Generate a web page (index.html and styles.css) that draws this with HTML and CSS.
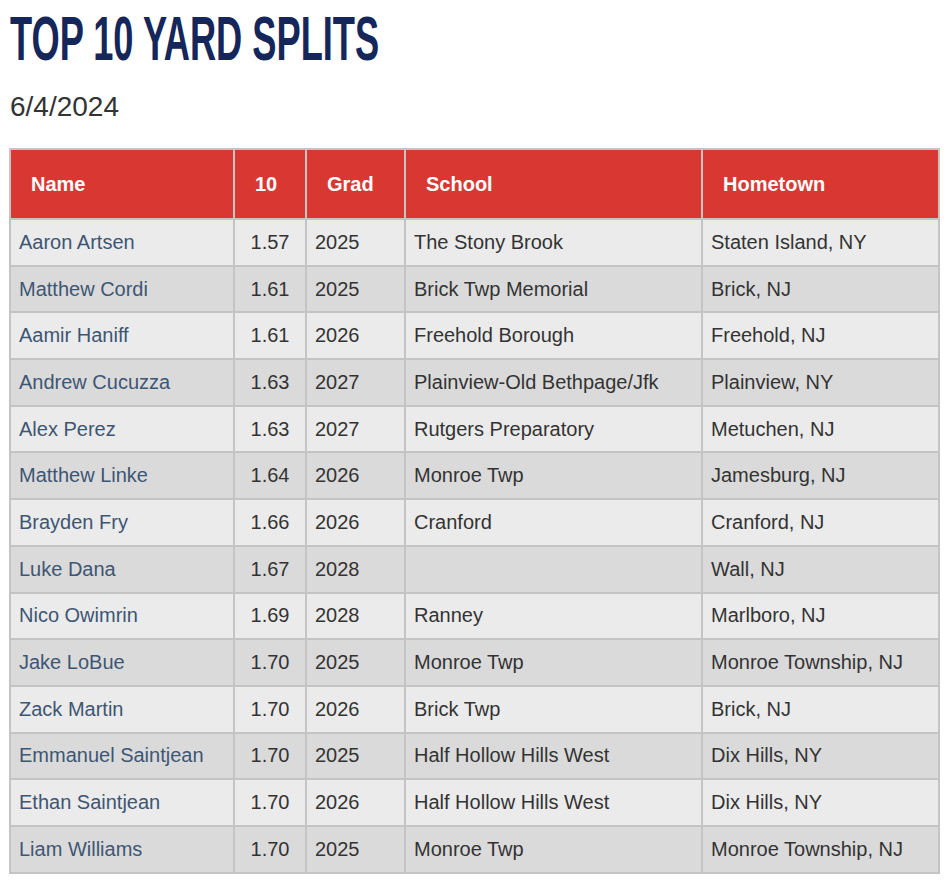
FILE: index.html
```html
<!DOCTYPE html>
<html lang="en">
<head>
<meta charset="utf-8">
<title>Top 10 Yard Splits</title>
<link rel="stylesheet" href="styles.css">
</head>
<body>
<main class="page">
  <h1 class="title"><span class="title-text">TOP 10 YARD SPLITS</span></h1>
  <p class="date">6/4/2024</p>
  <table class="splits">
    <colgroup>
      <col class="c-name"><col class="c-ten"><col class="c-grad"><col class="c-school"><col class="c-home">
    </colgroup>
    <thead>
      <tr><th>Name</th><th>10</th><th>Grad</th><th>School</th><th>Hometown</th></tr>
    </thead>
    <tbody>
      <tr><td class="name">Aaron Artsen</td><td class="num">1.57</td><td>2025</td><td>The Stony Brook</td><td>Staten Island, NY</td></tr>
      <tr><td class="name">Matthew Cordi</td><td class="num">1.61</td><td>2025</td><td>Brick Twp Memorial</td><td>Brick, NJ</td></tr>
      <tr><td class="name">Aamir Haniff</td><td class="num">1.61</td><td>2026</td><td>Freehold Borough</td><td>Freehold, NJ</td></tr>
      <tr><td class="name">Andrew Cucuzza</td><td class="num">1.63</td><td>2027</td><td>Plainview-Old Bethpage/Jfk</td><td>Plainview, NY</td></tr>
      <tr><td class="name">Alex Perez</td><td class="num">1.63</td><td>2027</td><td>Rutgers Preparatory</td><td>Metuchen, NJ</td></tr>
      <tr><td class="name">Matthew Linke</td><td class="num">1.64</td><td>2026</td><td>Monroe Twp</td><td>Jamesburg, NJ</td></tr>
      <tr><td class="name">Brayden Fry</td><td class="num">1.66</td><td>2026</td><td>Cranford</td><td>Cranford, NJ</td></tr>
      <tr><td class="name">Luke Dana</td><td class="num">1.67</td><td>2028</td><td></td><td>Wall, NJ</td></tr>
      <tr><td class="name">Nico Owimrin</td><td class="num">1.69</td><td>2028</td><td>Ranney</td><td>Marlboro, NJ</td></tr>
      <tr><td class="name">Jake LoBue</td><td class="num">1.70</td><td>2025</td><td>Monroe Twp</td><td>Monroe Township, NJ</td></tr>
      <tr><td class="name">Zack Martin</td><td class="num">1.70</td><td>2026</td><td>Brick Twp</td><td>Brick, NJ</td></tr>
      <tr><td class="name">Emmanuel Saintjean</td><td class="num">1.70</td><td>2025</td><td>Half Hollow Hills West</td><td>Dix Hills, NY</td></tr>
      <tr><td class="name">Ethan Saintjean</td><td class="num">1.70</td><td>2026</td><td>Half Hollow Hills West</td><td>Dix Hills, NY</td></tr>
      <tr><td class="name">Liam Williams</td><td class="num">1.70</td><td>2025</td><td>Monroe Twp</td><td>Monroe Township, NJ</td></tr>
    </tbody>
  </table>
</main>
</body>
</html>
```
FILE: styles.css
```css
html, body {
  margin: 0;
  padding: 0;
  background: #ffffff;
}

.page {
  padding: 0 8px 0 9px;
  font-family: "Liberation Sans", Arial, Helvetica, sans-serif;
  color: #333333;
}

.title {
  margin: 0;
  padding-top: 6px;
  padding-left: 1px;
  height: 64px;
  font-family: "Liberation Sans Narrow", "Liberation Sans", sans-serif;
  font-weight: 700;
  font-size: 63px;
  line-height: 64px;
  color: #15275a;
  white-space: nowrap;
}

.title-text {
  display: inline-block;
  transform: scaleX(0.575);
  transform-origin: left center;
}

.date {
  margin: 21px 0 0 1px;
  font-size: 28px;
  line-height: 32px;
  color: #333333;
}

.splits {
  margin-top: 25px;
  width: 100%;
  border-collapse: collapse;
  table-layout: fixed;
  font-size: 20px;
  border: 2px solid #c4c4c4;
}

.c-name { width: 224px; }
.c-ten { width: 72px; }
.c-grad { width: 99px; }
.c-school { width: 297px; }
.c-home { width: auto; }

.splits th,
.splits td {
  border: 2px solid #c4c4c4;
  text-align: left;
  white-space: nowrap;
}

.splits th {
  background: #d93832;
  color: #ffffff;
  font-weight: 700;
  height: 68px;
  padding: 0 0 0 20px;
}

.splits td {
  height: 44.7px;
  padding: 0 0 0 8px;
  color: #333333;
}

.splits tbody tr:nth-child(odd) td { background: #ebebeb; }
.splits tbody tr:nth-child(even) td { background: #dadada; }

.splits td.name { color: #3d5674; }
.splits td.num { text-align: center; padding: 0; }
```
